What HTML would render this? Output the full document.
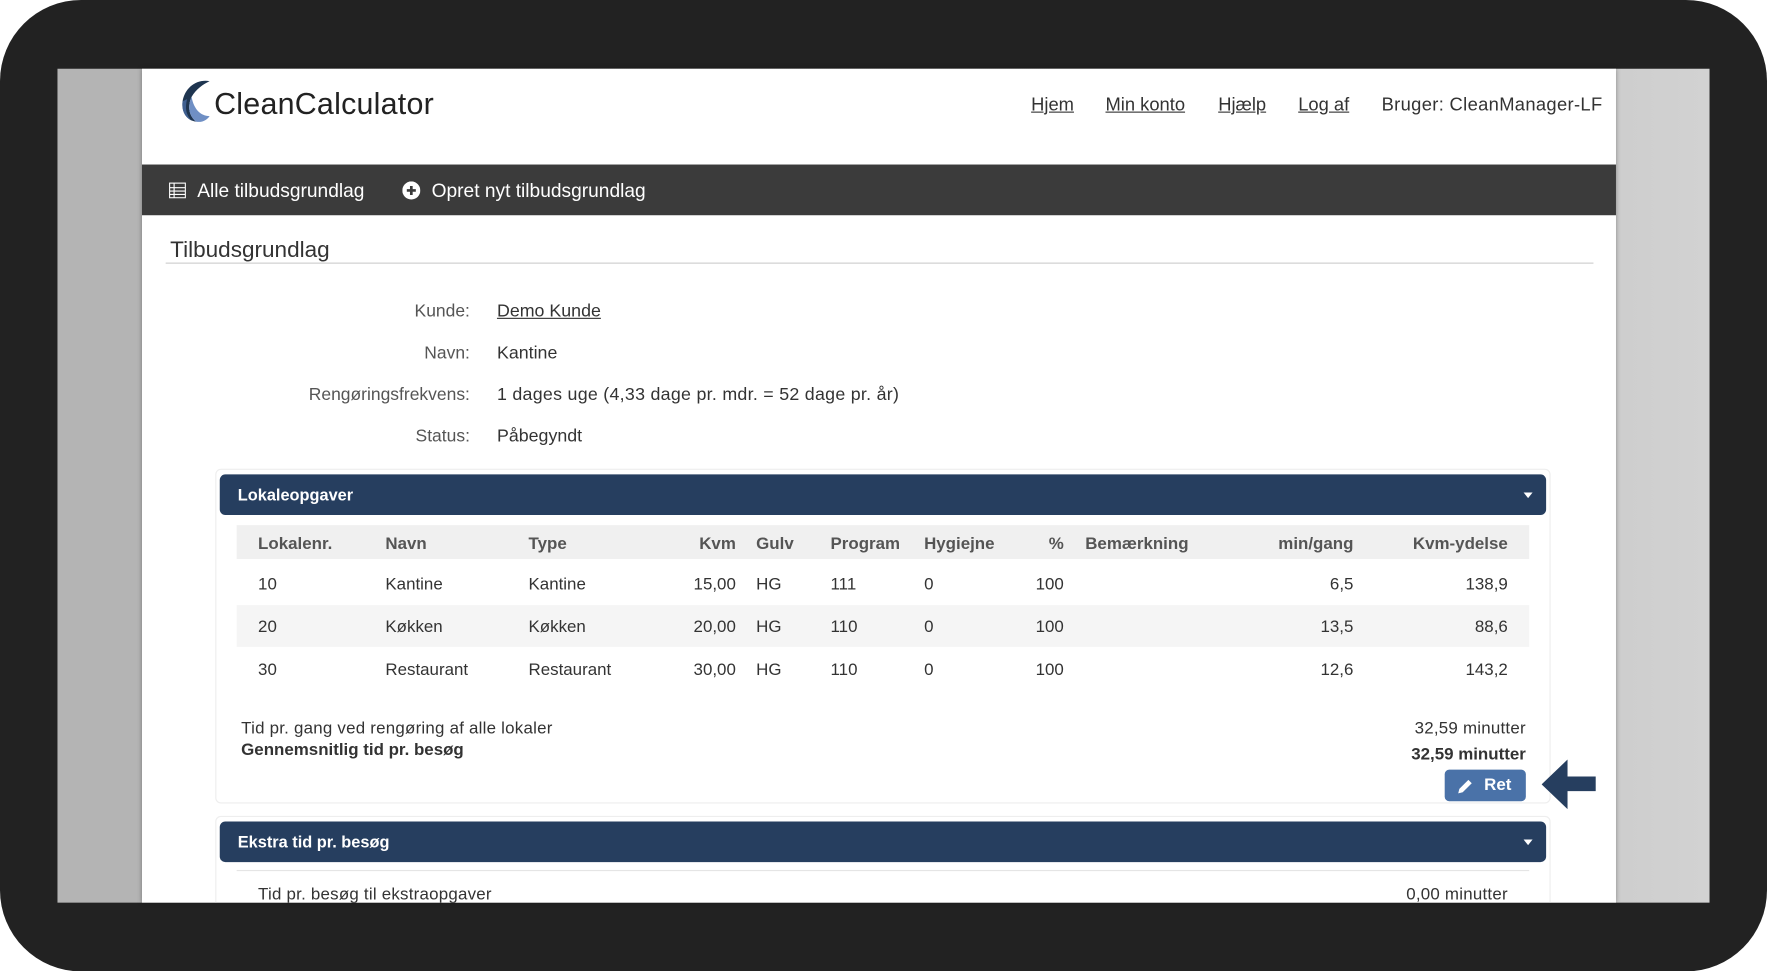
<!DOCTYPE html>
<html><head><meta charset="utf-8"><style>
*{margin:0;padding:0;box-sizing:border-box}
html,body{width:1767px;height:971px;overflow:hidden;background:#fff}
#s{position:absolute;left:0;top:0;width:1568px;height:862px;transform:scale(1.12691);transform-origin:0 0;font-family:"Liberation Sans",sans-serif;color:#333}
.a{position:absolute;white-space:nowrap}
.frame{left:0;top:0;width:1568px;height:862px;background:#222;border-radius:72px}
.scr{left:51px;top:61px;width:1466px;height:740px;background:linear-gradient(90deg,#b4b4b4 0,#b4b4b4 60%,#d2d2d2 100%)}
.pan{left:126px;top:61px;width:1308px;height:740px;background:#fff;box-shadow:0 0 4px rgba(0,0,0,.35);overflow:hidden}
.nav a{color:#333;text-decoration:underline;font-size:16.3px}
.bar{left:0;top:85px;width:1308px;height:45px;background:#3b3b3b;color:#fff;font-size:17px}
.lbl{font-size:15.5px;color:#555;text-align:right;width:300px}
.val{font-size:15.8px;color:#333}
.hdr{background:#263e5f;border-radius:5px;color:#fff;font-weight:bold;font-size:14.5px;height:36px;line-height:38px;padding-left:16px}
.th{font-size:15px;font-weight:bold;color:#555}
.td{font-size:15px;color:#333}
.r{text-align:right}
</style></head><body><div id="s">
<div class="a frame"></div>
<div class="a scr"></div>
<div class="a pan">
 <svg class="a" style="left:30px;top:9px" width="34" height="40" viewBox="0 0 34 40">
  <path d="M30 2 C18 0 8 8 6 20 C5 30 10 37 18 38 C12 33 10 25 14 16 C18 9 24 5 30 2Z" fill="#1f3550"/>
  <path d="M14 16 C10 25 12 33 18 38 C24 39 28 36 30 33 C22 33 16 27 14 16Z" fill="#6f8fc4"/>
  <path d="M6 20 C5 28 8 34 14 37 C9 32 8 26 10 18Z" fill="#3f5f90"/>
 </svg>
 <div class="a" style="left:64px;top:16px;font-size:27px;color:#222;letter-spacing:.2px;font-weight:300">CleanCalculator</div>
 <div class="a nav" style="left:789px;top:23px"><a>Hjem</a></div>
 <div class="a nav" style="left:855px;top:23px"><a>Min konto</a></div>
 <div class="a nav" style="left:955px;top:23px"><a>Hjælp</a></div>
 <div class="a nav" style="left:1026px;top:23px"><a>Log af</a></div>
 <div class="a" style="left:1100px;top:23px;font-size:16.3px;letter-spacing:.3px">Bruger: CleanManager-LF</div>
 <div class="a bar">
  <svg class="a" style="left:24px;top:16px" width="15" height="14" viewBox="0 0 15 14"><rect x=".5" y=".5" width="14" height="13" fill="none" stroke="#fff"/><path d="M.5 4.5H14.5M.5 7.5H14.5M.5 10.5H14.5M4.5 .5V13.5" stroke="#fff"/></svg>
  <div class="a" style="left:49px;top:14px">Alle tilbudsgrundlag</div>
  <svg class="a" style="left:231px;top:15px" width="16" height="16" viewBox="0 0 16 16"><circle cx="8" cy="8" r="8" fill="#fff"/><path d="M8 4V12M4 8H12" stroke="#3b3b3b" stroke-width="2.4"/></svg>
  <div class="a" style="left:257px;top:14px">Opret nyt tilbudsgrundlag</div>
 </div>
 <div class="a" style="left:25px;top:150px;font-size:20px;color:#333">Tilbudsgrundlag</div>
 <div class="a" style="left:21px;top:172px;width:1267px;height:1px;background:#ccc"></div>
 <div class="a lbl" style="left:-9px;top:207px">Kunde:</div><div class="a val" style="left:315px;top:207px;text-decoration:underline">Demo Kunde</div>
 <div class="a lbl" style="left:-9px;top:244px">Navn:</div><div class="a val" style="left:315px;top:244px">Kantine</div>
 <div class="a lbl" style="left:-9px;top:281px">Rengøringsfrekvens:</div><div class="a val" style="left:315px;top:281px;letter-spacing:.25px">1 dages uge (4,33 dage pr. mdr. = 52 dage pr. år)</div>
 <div class="a lbl" style="left:-9px;top:318px">Status:</div><div class="a val" style="left:315px;top:318px">Påbegyndt</div>

 <div class="a" style="left:65px;top:355px;width:1185px;height:297px;border:1px solid #eee;border-radius:5px"></div>
 <div class="a hdr" style="left:69px;top:360px;width:1177px">Lokaleopgaver</div>
 <div class="a" style="left:1226px;top:376px;border:4px solid transparent;border-top:5px solid #fff"></div>
 <div class="a" style="left:84px;top:405px;width:1147px;height:30px;background:#f0f0f0"></div>
 <div class="a" style="left:84px;top:476px;width:1147px;height:37px;background:#f5f5f5"></div>
 <div class="a th" style="left:103px;top:413px">Lokalenr.</div>
 <div class="a th" style="left:216px;top:413px">Navn</div>
 <div class="a th" style="left:343px;top:413px">Type</div>
 <div class="a th r" style="left:427px;top:413px;width:100px">Kvm</div>
 <div class="a th" style="left:545px;top:413px">Gulv</div>
 <div class="a th" style="left:611px;top:413px">Program</div>
 <div class="a th" style="left:694px;top:413px">Hygiejne</div>
 <div class="a th r" style="left:718px;top:413px;width:100px">%</div>
 <div class="a th" style="left:837px;top:413px">Bemærkning</div>
 <div class="a th r" style="left:975px;top:413px;width:100px">min/gang</div>
 <div class="a th r" style="left:1112px;top:413px;width:100px">Kvm-ydelse</div>

 <div class="a td" style="left:103px;top:449px">10</div><div class="a td" style="left:216px;top:449px">Kantine</div><div class="a td" style="left:343px;top:449px">Kantine</div><div class="a td r" style="left:427px;top:449px;width:100px">15,00</div><div class="a td" style="left:545px;top:449px">HG</div><div class="a td" style="left:611px;top:449px">111</div><div class="a td" style="left:694px;top:449px">0</div><div class="a td r" style="left:718px;top:449px;width:100px">100</div><div class="a td r" style="left:975px;top:449px;width:100px">6,5</div><div class="a td r" style="left:1112px;top:449px;width:100px">138,9</div>
 <div class="a td" style="left:103px;top:487px">20</div><div class="a td" style="left:216px;top:487px">Køkken</div><div class="a td" style="left:343px;top:487px">Køkken</div><div class="a td r" style="left:427px;top:487px;width:100px">20,00</div><div class="a td" style="left:545px;top:487px">HG</div><div class="a td" style="left:611px;top:487px">110</div><div class="a td" style="left:694px;top:487px">0</div><div class="a td r" style="left:718px;top:487px;width:100px">100</div><div class="a td r" style="left:975px;top:487px;width:100px">13,5</div><div class="a td r" style="left:1112px;top:487px;width:100px">88,6</div>
 <div class="a td" style="left:103px;top:525px">30</div><div class="a td" style="left:216px;top:525px">Restaurant</div><div class="a td" style="left:343px;top:525px">Restaurant</div><div class="a td r" style="left:427px;top:525px;width:100px">30,00</div><div class="a td" style="left:545px;top:525px">HG</div><div class="a td" style="left:611px;top:525px">110</div><div class="a td" style="left:694px;top:525px">0</div><div class="a td r" style="left:718px;top:525px;width:100px">100</div><div class="a td r" style="left:975px;top:525px;width:100px">12,6</div><div class="a td r" style="left:1112px;top:525px;width:100px">143,2</div>

 <div class="a td" style="left:88px;top:577px;letter-spacing:.2px">Tid pr. gang ved rengøring af alle lokaler</div>
 <div class="a td" style="left:88px;top:596px;font-weight:bold">Gennemsnitlig tid pr. besøg</div>
 <div class="a td r" style="left:928px;top:577px;width:300px;letter-spacing:.2px">32,59 minutter</div>
 <div class="a td r" style="left:928px;top:600px;width:300px;font-weight:bold">32,59 minutter</div>
 <div class="a" style="left:1156px;top:622px;width:72px;height:28px;background:#4a72a8;border-radius:4px;color:#fff;font-weight:bold;font-size:15px;line-height:28px">
  <svg class="a" style="left:11px;top:7px" width="15" height="15" viewBox="0 0 15 15"><path d="M1 14 L2 10 L10 2 L13 5 L5 13Z" fill="#fff"/></svg>
  <span class="a" style="left:35px;top:0">Ret</span></div>
 <svg class="a" style="left:1242px;top:612px" width="50" height="46" viewBox="0 0 50 46"><path d="M0 23 L23 1 L23 16 L48 16 L48 29 L23 29 L23 45Z" fill="#263e5f"/></svg>

 <div class="a" style="left:65px;top:663px;width:1185px;height:90px;border:1px solid #eee;border-radius:5px"></div>
 <div class="a hdr" style="left:69px;top:668px;width:1177px">Ekstra tid pr. besøg</div>
 <div class="a" style="left:1226px;top:684px;border:4px solid transparent;border-top:5px solid #fff"></div>
 <div class="a" style="left:84px;top:711px;width:1147px;height:1px;background:#e5e5e5"></div>
 <div class="a td" style="left:103px;top:724px;letter-spacing:.2px">Tid pr. besøg til ekstraopgaver</div>
 <div class="a td r" style="left:912px;top:724px;width:300px;letter-spacing:.2px">0,00 minutter</div>
</div>
</div></body></html>
